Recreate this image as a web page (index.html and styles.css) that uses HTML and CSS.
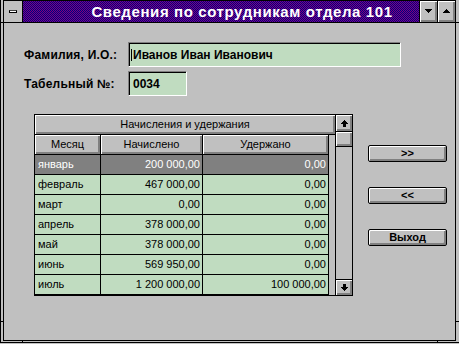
FILE: index.html
```html
<!DOCTYPE html>
<html lang="ru">
<head>
<meta charset="utf-8">
<title>Сведения по сотрудникам отдела 101</title>
<link rel="stylesheet" href="styles.css">
</head>
<body>
<div class="window">
  <div class="inner">
    <div class="titlebar">
      <div class="sysmenu"><span class="sysbar"></span></div>
      <div class="caption">Сведения по сотрудникам отдела 101</div>
      <div class="tbtn">
        <svg width="7" height="4" viewBox="0 0 7 4" shape-rendering="crispEdges"><rect x="0" y="0" width="7" height="1"/><rect x="1" y="1" width="5" height="1"/><rect x="2" y="2" width="3" height="1"/><rect x="3" y="3" width="1" height="1"/></svg>
      </div>
      <div class="tbtn">
        <svg width="7" height="4" viewBox="0 0 7 4" shape-rendering="crispEdges"><rect x="3" y="0" width="1" height="1"/><rect x="2" y="1" width="3" height="1"/><rect x="1" y="2" width="5" height="1"/><rect x="0" y="3" width="7" height="1"/></svg>
      </div>
    </div>
    <div class="client">
      <div class="form">
        <div class="lbl">Фамилия, И.О.:</div>
        <div class="field field-wide"><span class="caret"></span>Иванов Иван Иванович</div>
        <div class="lbl">Табельный №:</div>
        <div class="field field-narrow">0034</div>
      </div>
      <div class="lower">
        <div class="grid">
          <div class="table">
            <div class="band">Начисления и удержания</div>
            <div class="row head">
              <div class="cell c1">Месяц</div>
              <div class="cell c2">Начислено</div>
              <div class="cell c3">Удержано</div>
            </div>
            <div class="row data sel">
              <div class="cell c1">январь</div>
              <div class="cell c2">200 000,00</div>
              <div class="cell c3">0,00</div>
            </div>
            <div class="row data">
              <div class="cell c1">февраль</div>
              <div class="cell c2">467 000,00</div>
              <div class="cell c3">0,00</div>
            </div>
            <div class="row data">
              <div class="cell c1">март</div>
              <div class="cell c2">0,00</div>
              <div class="cell c3">0,00</div>
            </div>
            <div class="row data">
              <div class="cell c1">апрель</div>
              <div class="cell c2">378 000,00</div>
              <div class="cell c3">0,00</div>
            </div>
            <div class="row data">
              <div class="cell c1">май</div>
              <div class="cell c2">378 000,00</div>
              <div class="cell c3">0,00</div>
            </div>
            <div class="row data">
              <div class="cell c1">июнь</div>
              <div class="cell c2">569 950,00</div>
              <div class="cell c3">0,00</div>
            </div>
            <div class="row data">
              <div class="cell c1">июль</div>
              <div class="cell c2">1 200 000,00</div>
              <div class="cell c3">100 000,00</div>
            </div>
          </div>
          <div class="scroll">
            <div class="sb-btn sb-up">
              <svg width="7" height="7" viewBox="0 0 7 7" shape-rendering="crispEdges"><rect x="3" y="0" width="1" height="1"/><rect x="2" y="1" width="3" height="1"/><rect x="1" y="2" width="5" height="1"/><rect x="0" y="3" width="7" height="1"/><rect x="2" y="4" width="3" height="3"/></svg>
            </div>
            <div class="sb-thumb"></div>
            <div class="sb-track"></div>
            <div class="sb-btn sb-down">
              <svg width="7" height="7" viewBox="0 0 7 7" shape-rendering="crispEdges"><rect x="2" y="0" width="3" height="3"/><rect x="0" y="3" width="7" height="1"/><rect x="1" y="4" width="5" height="1"/><rect x="2" y="5" width="3" height="1"/><rect x="3" y="6" width="1" height="1"/></svg>
            </div>
          </div>
        </div>
        <div class="buttons">
          <div class="btn">&gt;&gt;</div>
          <div class="btn">&lt;&lt;</div>
          <div class="btn">Выход</div>
        </div>
      </div>
    </div>
  </div>
  <span class="mark mark-lt"></span>
  <span class="mark mark-lb"></span>
  <span class="mark mark-rt"></span>
  <span class="mark mark-rb"></span>
  <span class="mark mark-bl"></span>
  <span class="mark mark-br"></span>
</div>
</body>
</html>
```
FILE: styles.css
```css
html, body {
  margin: 0;
  padding: 0;
  background: #c0c0c0;
}

body {
  font-family: "Liberation Sans", Arial, sans-serif;
  color: #000;
}

.window {
  position: relative;
  box-sizing: border-box;
  width: 459px;
  height: 343px;
  background: #c0c0c0;
  border-left: 1px solid #000;
  border-bottom: 1px solid #000;
  padding: 0 3px 1px 2px;
}

.inner {
  box-sizing: border-box;
  height: 100%;
  border: 1px solid #000;
  display: flex;
  flex-direction: column;
}

/* ---------- title bar ---------- */
.titlebar {
  display: flex;
  height: 22px;
  box-sizing: border-box;
  border-bottom: 1px solid #000;
}

.sysmenu {
  width: 18px;
  border-right: 1px solid #000;
  display: flex;
  align-items: center;
  justify-content: center;
  background: #c0c0c0;
}

.sysbar {
  display: block;
  width: 6px;
  height: 1px;
  background: #fff;
  border: 1px solid #000;
  border-top-color: #404040;
}

.caption {
  flex: 1;
  background-color: #000080;
  background-image: conic-gradient(#800080 0 25%, transparent 0 50%, #800080 0 75%, transparent 0);
  background-size: 2px 2px;
  color: #fff;
  font-weight: bold;
  font-size: 15px;
  letter-spacing: 0.6px;
  line-height: 21px;
  text-align: center;
  padding-left: 42px;
  white-space: nowrap;
  overflow: hidden;
}

.tbtn {
  width: 17px;
  border-left: 1px solid #000;
  background: #c0c0c0;
  box-shadow: inset 1px 1px #fff, inset -2px -2px #808080;
  display: flex;
  align-items: center;
  justify-content: center;
}

.tbtn svg {
  display: block;
  margin-top: -1px;
  margin-left: -1px;
}

/* ---------- client ---------- */
.client {
  flex: 1;
  padding: 19px 0 0 20px;
}

.form {
  display: grid;
  grid-template-columns: 104px auto;
  grid-auto-rows: 25px;
  row-gap: 4px;
  align-items: center;
  justify-items: start;
}

.lbl {
  font-weight: bold;
  font-size: 12px;
  letter-spacing: 0.2px;
}

.field {
  box-sizing: border-box;
  height: 25px;
  background: #c0dcc0;
  border-top: 1px solid #808080;
  border-left: 1px solid #808080;
  border-bottom: 1px solid #fff;
  border-right: 1px solid #fff;
  box-shadow: inset 1px 1px #000;
  font-weight: bold;
  font-size: 12px;
  padding-left: 4px;
  display: flex;
  align-items: center;
  white-space: nowrap;
}

.field-wide { width: 273px; }
.field-narrow { width: 59px; }

.caret {
  display: inline-block;
  width: 1px;
  height: 12px;
  background: #000;
  margin-left: -2px;
  margin-right: 1px;
}

/* ---------- grid ---------- */
.lower {
  display: flex;
  align-items: flex-start;
  margin: 18px 0 0 10px;
}

.grid {
  box-sizing: border-box;
  width: 319px;
  height: 182px;
  border: 1px solid #000;
  display: flex;
  font-size: 11px;
}

.table {
  box-sizing: border-box;
  width: 301px;
  border-right: 1px solid #000;
  background: #c0c0c0;
}

.band {
  box-sizing: border-box;
  height: 20px;
  border-bottom: 1px solid #000;
  box-shadow: inset 1px 1px #fff, inset -2px -2px #808080;
  text-align: center;
  line-height: 19px;
}

.row {
  display: flex;
  height: 20px;
}

.cell {
  box-sizing: border-box;
  height: 20px;
  border-right: 1px solid #000;
  border-bottom: 1px solid #000;
  line-height: 19px;
  padding: 0 2px;
  white-space: nowrap;
  overflow: hidden;
}

.c1 { width: 66px; }
.c2 { width: 102px; }
.c3 { width: 126px; }

.head .cell {
  background: #c0c0c0;
  box-shadow: inset 1px 1px #fff, inset -2px -2px #808080;
  text-align: center;
}

.data .cell { background: #c0dcc0; }
.data .c1 { padding-left: 3px; }
.data .c2, .data .c3 { text-align: right; }

.sel .cell {
  background: #808080;
  color: #fff;
}

.scroll {
  width: 16px;
  display: flex;
  flex-direction: column;
}

.sb-btn {
  box-sizing: border-box;
  background: #c0c0c0;
  box-shadow: inset 1px 1px #fff, inset -2px -2px #808080;
  display: flex;
  align-items: center;
  justify-content: center;
}

.sb-btn svg { display: block; }

.sb-up {
  height: 17px;
  border-bottom: 1px solid #000;
}

.sb-thumb {
  box-sizing: border-box;
  height: 15px;
  border-bottom: 1px solid #000;
  background: #c0c0c0;
  box-shadow: inset 1px 1px #fff, inset -2px -2px #808080;
}

.sb-track {
  flex: 1;
  background: #c0c0c0;
}

.sb-down {
  height: 16px;
  border-top: 1px solid #000;
}

/* ---------- buttons ---------- */
.buttons {
  display: flex;
  flex-direction: column;
  gap: 25px;
  margin-left: 15px;
  padding-top: 31px;
}

.btn {
  box-sizing: border-box;
  width: 79px;
  height: 17px;
  border: 1px solid #000;
  border-radius: 2px;
  background: #c0c0c0;
  box-shadow: inset 1px 1px #fff, inset -2px -2px #808080;
  font-weight: bold;
  font-size: 11px;
  line-height: 15px;
  text-align: center;
}

/* ---------- frame corner marks ---------- */
.mark {
  position: absolute;
  background: #000;
}

.mark-lt { left: 0; top: 22px; width: 3px; height: 1px; }
.mark-lb { left: 0; top: 321px; width: 3px; height: 1px; }
.mark-rt { left: 455px; top: 22px; width: 4px; height: 1px; }
.mark-rb { left: 455px; top: 321px; width: 4px; height: 1px; }
.mark-bl { left: 21px; top: 341px; width: 1px; height: 1px; }
.mark-br { left: 436px; top: 341px; width: 1px; height: 1px; }
```
